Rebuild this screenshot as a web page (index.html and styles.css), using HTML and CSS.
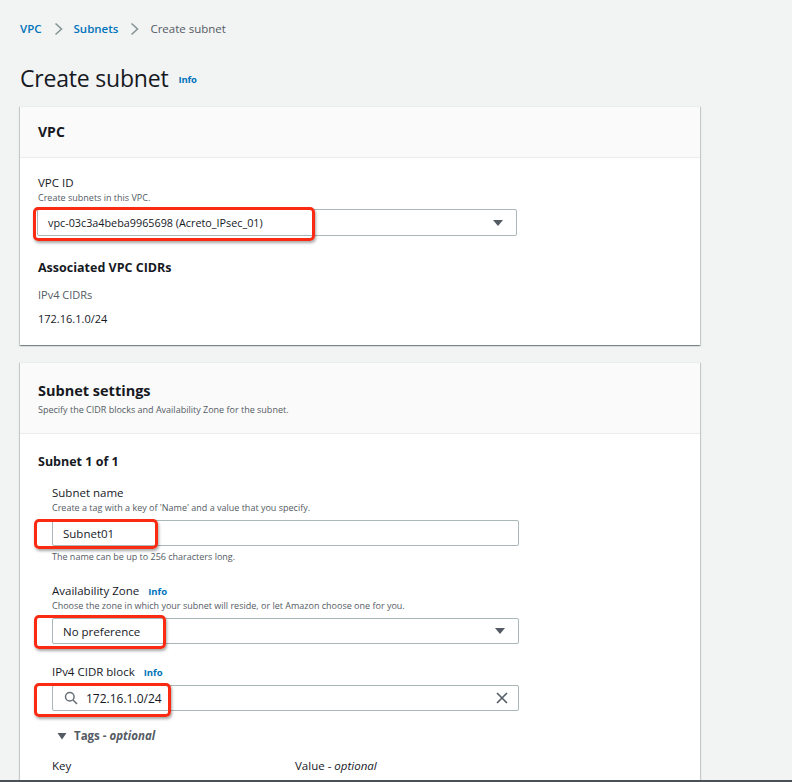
FILE: index.html
```html
<!DOCTYPE html>
<html lang="en">

<head>
    <meta charset="UTF-8">
    <meta name="viewport" content="width=device-width, initial-scale=1.0">
    <title>Create subnet</title>
    <link rel="stylesheet" href="styles.css">
</head>

<body>
    <div class="page">
        <nav class="crumbs">
            <a href="#">VPC</a>
            <svg class="chev" width="16" height="16" viewBox="0 0 16 16"><path d="M5.5 2.5l6 5.5-6 5.5" fill="none" stroke="#879596" stroke-width="1.6"/></svg>
            <a href="#">Subnets</a>
            <svg class="chev" width="16" height="16" viewBox="0 0 16 16"><path d="M5.5 2.5l6 5.5-6 5.5" fill="none" stroke="#879596" stroke-width="1.6"/></svg>
            <span class="current">Create subnet</span>
        </nav>

        <h1 class="title">Create subnet <a class="info" href="#">Info</a></h1>

        <!-- VPC card -->
        <section class="card">
            <header class="card-head">
                <h2>VPC</h2>
            </header>
            <div class="card-body">
                <div class="label">VPC ID</div>
                <div class="desc">Create subnets in this VPC.</div>
                <div class="field select wide">
                    <span>vpc-03c3a4beba9965698 (Acreto_IPsec_01)</span>
                    <svg class="caret" width="12" height="8" viewBox="0 0 12 8"><path d="M1 1h10L6 7z" fill="#545b64"/></svg>
                    <div class="mark mark-vpc"></div>
                </div>

                <h3 class="sub">Associated VPC CIDRs</h3>
                <div class="kv-key">IPv4 CIDRs</div>
                <div class="kv-val">172.16.1.0/24</div>
            </div>
        </section>

        <!-- Subnet settings card -->
        <section class="card card-2">
            <header class="card-head">
                <h2>Subnet settings</h2>
                <p class="head-desc">Specify the CIDR blocks and Availability Zone for the subnet.</p>
            </header>
            <div class="card-body">
                <h3 class="sub">Subnet 1 of 1</h3>
                <div class="group">
                    <div class="label">Subnet name</div>
                    <div class="desc">Create a tag with a key of 'Name' and a value that you specify.</div>
                    <div class="field">
                        <span>Subnet01</span>
                        <div class="mark mark-name"></div>
                    </div>
                    <div class="hint">The name can be up to 256 characters long.</div>

                    <div class="label spaced">Availability Zone <a class="info" href="#">Info</a></div>
                    <div class="desc">Choose the zone in which your subnet will reside, or let Amazon choose one for you.</div>
                    <div class="field select">
                        <span>No preference</span>
                        <svg class="caret" width="12" height="8" viewBox="0 0 12 8"><path d="M1 1h10L6 7z" fill="#545b64"/></svg>
                        <div class="mark mark-az"></div>
                    </div>

                    <div class="label spaced">IPv4 CIDR block <a class="info" href="#">Info</a></div>
                    <div class="field search">
                        <svg class="glass" width="14" height="14" viewBox="0 0 14 14"><circle cx="5.8" cy="5.8" r="4.3" fill="none" stroke="#687078" stroke-width="1.5"/><path d="M9 9l4 4" stroke="#687078" stroke-width="1.6"/></svg>
                        <span>172.16.1.0/24</span>
                        <svg class="clear" width="12" height="12" viewBox="0 0 12 12"><path d="M1 1l10 10M11 1L1 11" stroke="#545b64" stroke-width="1.6"/></svg>
                        <div class="mark mark-cidr"></div>
                    </div>

                    <div class="tags">
                        <svg width="10" height="8" viewBox="0 0 10 8"><path d="M0.5 1h9L5 7.5z" fill="#545b64"/></svg>
                        Tags - <em>optional</em>
                    </div>

                    <div class="tag-cols">
                        <span>Key</span>
                        <span>Value - <em>optional</em></span>
                    </div>
                </div>
            </div>
        </section>
    </div>
    <div class="edge"></div>
</body>
</html>
```

FILE: styles.css
```css
/* create subnet console page */

* {
    box-sizing: border-box;
}

body {
    margin: 0;
    height: 782px;
    overflow: hidden;
    background: #f2f3f3;
    font-family: "Open Sans", "Noto Sans", sans-serif;
    color: #16191f;
}

a {
    color: #0073bb;
    text-decoration: none;
}

.page {
    width: 700px;
    padding: 21px 0 0 20px;
}

/* breadcrumbs */

.crumbs {
    display: flex;
    align-items: center;
    gap: 8px;
    height: 16px;
    font-size: 11.5px;
    line-height: 16px;
}

.crumbs a {
    font-weight: 600;
}

.crumbs .current {
    color: #545b64;
    font-weight: 500;
}

.title {
    display: flex;
    align-items: center;
    gap: 10px;
    height: 30px;
    margin: 26px 0 13px;
    font-size: 23px;
    font-weight: 400;
    line-height: 30px;
    letter-spacing: -0.2px;
}

.title .info {
    margin-top: 4px;
}

.info {
    font-size: 9.5px;
    font-weight: 700;
    line-height: 12px;
}

/* cards */

.card {
    background: #fff;
    border-top: 1px solid #eaeded;
    box-shadow: 0 1px 1px 0 rgba(0, 28, 36, 0.3), 1px 1px 1px 0 rgba(0, 28, 36, 0.15), -1px 1px 1px 0 rgba(0, 28, 36, 0.15);
}

.card-2 {
    margin-top: 17px;
}

.card-head {
    background: #fafafa;
    border-bottom: 1px solid #eaeded;
    padding: 17px 18px 17px;
}

.card-head h2 {
    margin: 0;
    font-size: 14px;
    font-weight: 700;
    line-height: 16px;
}

.card-2 .card-head {
    padding: 19px 18px 17px;
}

.card-2 .card-head h2 {
    font-size: 14.5px;
    line-height: 18px;
}

.head-desc {
    margin: 4px 0 0;
    font-size: 9px;
    line-height: 12px;
    color: #545b64;
}

.card-body {
    padding: 17px 18px 19px;
}

.card-2 .card-body {
    padding: 20px 18px 14px;
}

.label {
    font-size: 11.5px;
    line-height: 16px;
}

.label .info {
    margin-left: 6px;
}

.label.spaced {
    margin-top: 20px;
}

.desc,
.hint {
    margin-top: 1px;
    font-size: 9px;
    line-height: 12px;
    color: #545b64;
}

.hint {
    margin-top: 5px;
}

/* inputs */

.field {
    position: relative;
    display: flex;
    align-items: center;
    gap: 8px;
    width: 467px;
    height: 26px;
    margin-top: 6px;
    padding: 0 10px;
    border: 1px solid #aab7b8;
    border-radius: 2px;
    font-size: 11.5px;
}

.field.wide {
    width: 480px;
    height: 27px;
    margin: 5px 0 0 -1px;
    font-size: 10.8px;
}

.field.search {
    margin-top: 5px;
}

.field.search span {
    font-size: 12px;
}

.field .caret,
.field .clear {
    margin-left: auto;
}

.field.select .caret {
    margin-right: 2px;
}

.glass {
    margin-left: 1px;
}

/* red annotation boxes */

.mark {
    position: absolute;
    border: 3px solid #fa2b12;
    border-radius: 5px;
    box-shadow: 1px 2px 3px rgba(0, 0, 0, 0.35);
}

.mark-vpc {
    left: -5px;
    top: -3px;
    width: 282px;
    height: 34px;
}

.mark-name {
    left: -19px;
    top: -2px;
    width: 124px;
    height: 30px;
}

.mark-az {
    left: -19px;
    top: -4px;
    width: 132px;
    height: 34px;
}

.mark-cidr {
    left: -19px;
    top: -3px;
    width: 137px;
    height: 34px;
}

/* read-only values */

.sub {
    margin: 24px 0 0;
    font-size: 12.5px;
    font-weight: 700;
    line-height: 16px;
}

.card-2 .sub {
    margin: 0;
}

.kv-key {
    margin-top: 12px;
    font-size: 11px;
    line-height: 14px;
    color: #545b64;
}

.kv-val {
    margin-top: 10px;
    font-size: 11px;
    line-height: 14px;
}

.group {
    padding-left: 14px;
    margin-top: 15px;
}

.tags {
    display: flex;
    align-items: center;
    gap: 7px;
    margin: 17px 0 0 5px;
    font-size: 11.5px;
    font-weight: 700;
    line-height: 16px;
    color: #545b64;
}

.tags em {
    margin-left: -4px;
}

.tag-cols {
    display: grid;
    grid-template-columns: 243px 1fr;
    margin-top: 14px;
    font-size: 11.5px;
    line-height: 16px;
}

.edge {
    position: fixed;
    left: 0;
    right: 0;
    bottom: 0;
    height: 2px;
    background: #4a5058;
}
```
